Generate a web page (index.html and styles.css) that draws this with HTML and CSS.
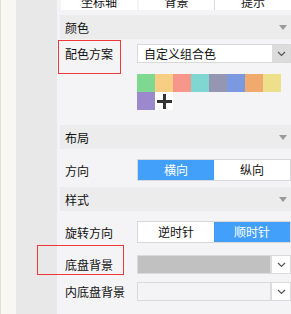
FILE: index.html
```html
<!DOCTYPE html>
<html lang="zh-CN">
<head>
    <meta charset="utf-8">
    <title>图表属性</title>
    <link rel="stylesheet" href="styles.css">
</head>
<body>
    <div class="edge"></div>
    <div class="gutter"></div>
    <div class="panel">
        <div class="tabs">
            <div class="tab">坐标轴</div>
            <div class="tab">背景</div>
            <div class="tab tab-last">提示</div>
        </div>

        <div class="group-head">颜色<span class="caret"></span></div>
        <div class="row row-scheme">
            <div class="label">配色方案</div>
            <div class="select">
                <span class="select-text">自定义组合色</span>
                <span class="select-arrow arrow-grey">
                    <svg width="9" height="6" viewBox="0 0 9 6"><polyline points="1,1 4.5,4.5 8,1" fill="none" stroke="#555" stroke-width="1.2"/></svg>
                </span>
            </div>
        </div>
        <div class="swatches">
            <span class="swatch" style="background:#7fd890"></span>
            <span class="swatch" style="background:#f8cd84"></span>
            <span class="swatch" style="background:#f7968b"></span>
            <span class="swatch" style="background:#80d7d1"></span>
            <span class="swatch" style="background:#9596b1"></span>
            <span class="swatch" style="background:#7b99e1"></span>
            <span class="swatch" style="background:#f1aa6d"></span>
            <span class="swatch" style="background:#eedf8b"></span>
            <span class="swatch" style="background:#9b88cd"></span>
            <span class="swatch swatch-add">
                <svg width="15" height="15" viewBox="0 0 15 15"><rect x="6" y="0" width="3" height="15" fill="#333"/><rect x="0" y="6" width="15" height="3" fill="#333"/></svg>
            </span>
        </div>

        <div class="group-head head-layout">布局<span class="caret"></span></div>
        <div class="row row-toggle">
            <div class="label">方向</div>
            <div class="toggle">
                <span class="toggle-item active">横向</span>
                <span class="toggle-item">纵向</span>
            </div>
        </div>

        <div class="group-head head-style">样式<span class="caret"></span></div>
        <div class="row row-toggle">
            <div class="label">旋转方向</div>
            <div class="toggle">
                <span class="toggle-item">逆时针</span>
                <span class="toggle-item active">顺时针</span>
            </div>
        </div>
        <div class="row row-bg">
            <div class="label">底盘背景</div>
            <div class="select select-fill">
                <span class="select-text"></span>
                <span class="select-arrow">
                    <svg width="9" height="6" viewBox="0 0 9 6"><polyline points="1,1 4.5,4.5 8,1" fill="none" stroke="#555" stroke-width="1.2"/></svg>
                </span>
            </div>
        </div>
        <div class="row row-inner">
            <div class="label">内底盘背景</div>
            <div class="select select-empty">
                <span class="select-text"></span>
                <span class="select-arrow">
                    <svg width="9" height="6" viewBox="0 0 9 6"><polyline points="1,1 4.5,4.5 8,1" fill="none" stroke="#555" stroke-width="1.2"/></svg>
                </span>
            </div>
        </div>
    </div>

    <div class="mark mark-scheme"></div>
    <div class="mark mark-bg"></div>
</body>
</html>
```

FILE: styles.css
```css
body {
    margin: 0;
    height: 314px;
    display: flex;
    overflow: hidden;
    font-family: "Noto Sans CJK SC", "Noto Sans", sans-serif;
    font-size: 12px;
    color: #111;
    background: #f4f4f6;
}

.edge {
    width: 15px;
    background: #f8f7f3;
    border-left: 1px solid #e7e0d0;
}

.gutter {
    width: 42px;
    background: #e8e8e8;
}

.panel {
    flex: 1;
    padding-left: 3px;
    background: #f4f4f6;
}

/* tab strip, scrolled so only its lower part shows */
.tabs {
    display: flex;
    height: 10px;
    overflow: hidden;
    padding-left: 1px;
}
.tab {
    width: 76px;
    margin-top: -5px;
    height: 15px;
    line-height: 14px;
    text-align: center;
    background: #fff;
    margin-right: 2px;
}
.tab:nth-child(2) {
    width: 75px;
    margin-right: 0;
    border-right: 1px solid #dcdcdc;
}
.tab-last {
    flex: 1;
    margin-right: 0;
}

.group-head {
    height: 24px;
    margin-top: 5px;
    padding: 0 4px 0 5px;
    background: #ececec;
    display: flex;
    align-items: center;
    justify-content: space-between;
}
.head-layout {
    margin-top: 15px;
}
.head-style {
    margin-top: 6px;
}
.caret {
    width: 0;
    height: 0;
    border-left: 4px solid transparent;
    border-right: 4px solid transparent;
    border-top: 5px solid #9a9a9a;
}

.row {
    display: flex;
    align-items: center;
}
.label {
    width: 72px;
    padding-left: 5px;
}
.row-scheme {
    margin-top: 5px;
}
.row-toggle {
    margin-top: 10px;
}
.row-bg {
    margin-top: 12px;
}
.row-inner {
    margin-top: 8px;
}

.select {
    flex: 1;
    height: 17px;
    border: 1px solid #d8d8d8;
    background: #fff;
    display: flex;
}
.select-text {
    flex: 1;
    padding-left: 6px;
    line-height: 17px;
    font-size: 12px;
}
.select-arrow {
    width: 18px;
    display: flex;
    align-items: center;
    justify-content: center;
    background: #fff;
    border-left: 2px solid #dcdcdc;
}
.arrow-grey {
    background: #dcdcdc;
    border-left: 0;
    width: 18px;
}
.select-fill .select-text {
    background: #c1c1c1;
}
.select-empty .select-text {
    background: #f4f4f6;
}
.select-fill,
.select-empty {
    border-color: #dadada;
}

.swatches {
    margin: 11px 0 0 77px;
    width: 144px;
    display: flex;
    flex-wrap: wrap;
}
.swatch {
    width: 18px;
    height: 18px;
}
.swatch-add {
    background: #fff;
    display: flex;
    align-items: center;
    justify-content: center;
}

.toggle {
    flex: 1;
    height: 20px;
    border: 1px solid #d8d8d8;
    display: flex;
}
.toggle-item {
    flex: 1;
    background: #fff;
    text-align: center;
    line-height: 20px;
    color: #111;
}
.toggle-item.active {
    background: #42a0fb;
    color: #fff;
}

/* red annotation frames */
.mark {
    position: absolute;
    border: 1px solid #f03a3a;
}
.mark-scheme {
    left: 58px;
    top: 40px;
    width: 61px;
    height: 32px;
}
.mark-bg {
    left: 37px;
    top: 245px;
    width: 85px;
    height: 28px;
}
```
